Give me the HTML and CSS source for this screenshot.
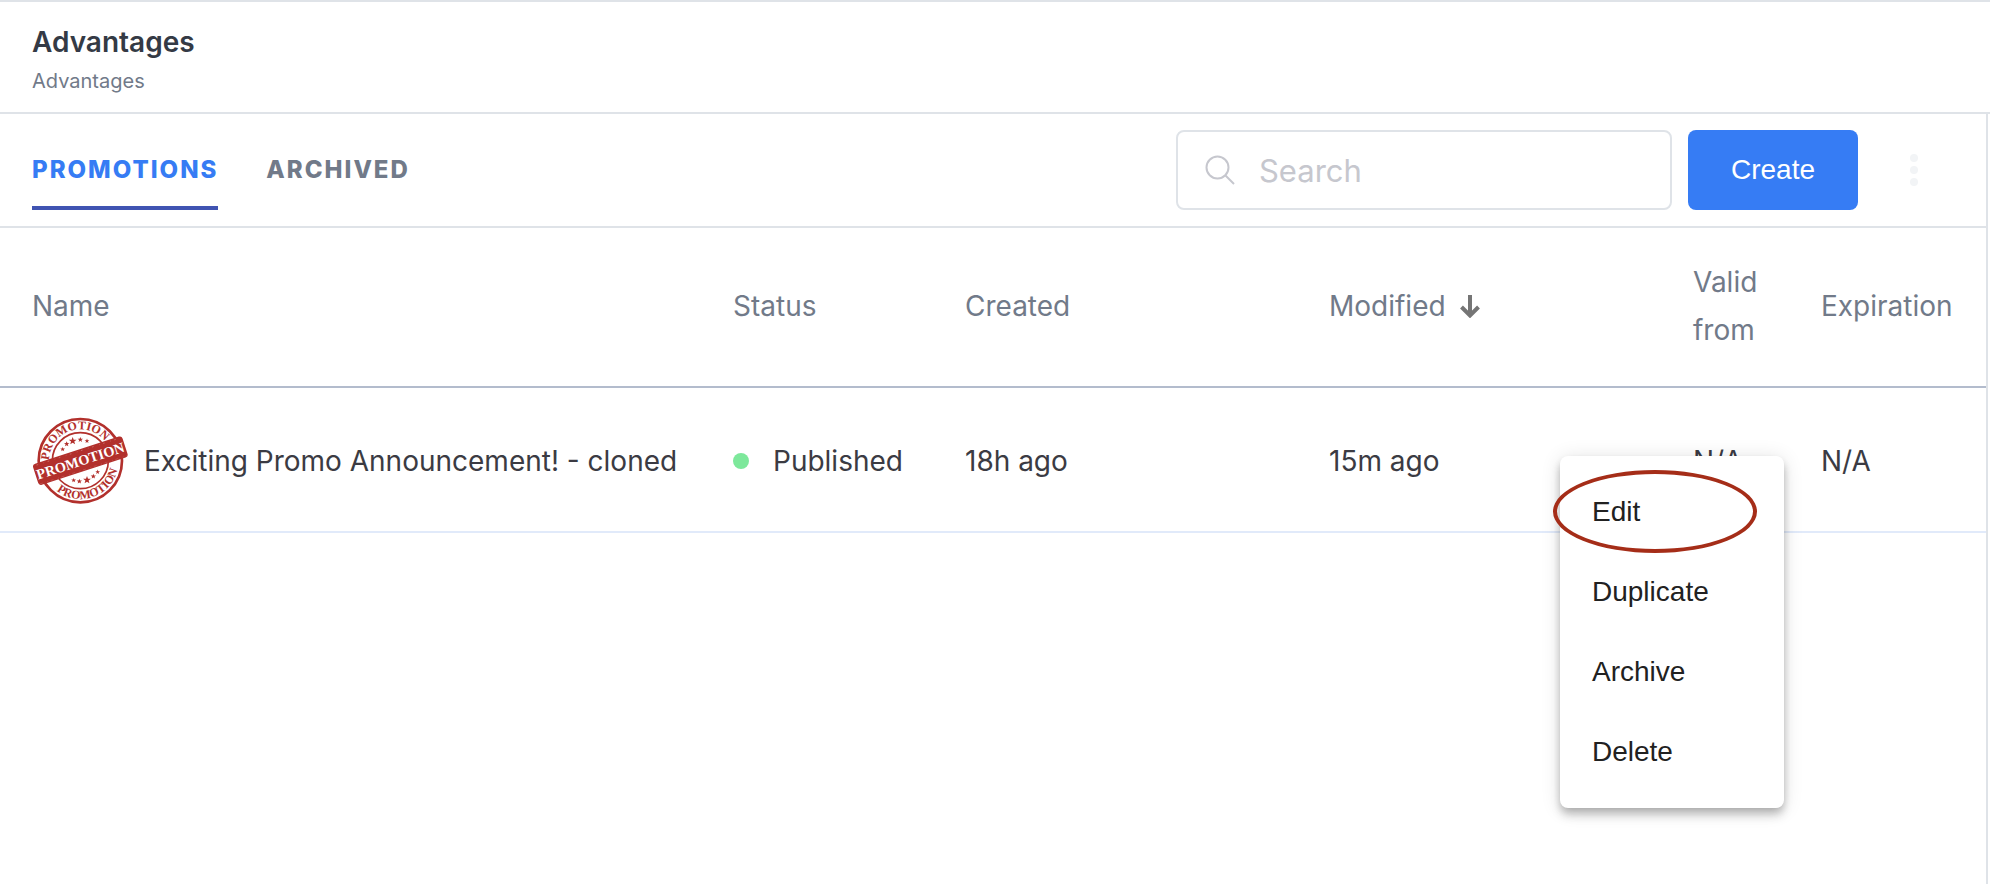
FILE: index.html
```
<!doctype html>
<html lang="en">
<head>
    <meta charset="utf-8">
    <title>Advantages</title>
    <link rel="stylesheet" href="styles.css">
</head>
<body>
    <header class="header">
        <h1>Advantages</h1>
        <p>Advantages</p>
    </header>
    <main class="main">
        <div class="toolbar">
            <nav class="tabs">
                <a href="#promotions" class="current">PROMOTIONS</a>
                <a href="#archived">ARCHIVED</a>
            </nav>
            <label class="search" for="search">
                <svg width="30" height="30" viewBox="0 0 30 30" fill="none" stroke="#c6c7ce" stroke-width="2" aria-hidden="true">
                    <circle cx="12.5" cy="12.5" r="11"/>
                    <path d="M20.5 20.5L29 29"/>
                </svg>
                <input type="text" id="search" placeholder="Search" aria-label="Search">
            </label>
            <button type="button" class="create">Create</button>
            <button type="button" class="more" aria-label="More">
                <svg width="8" height="32" viewBox="0 0 8 32" fill="#f2f4f6">
                    <circle cx="4" cy="4" r="4"/>
                    <circle cx="4" cy="16" r="4"/>
                    <circle cx="4" cy="28" r="4"/>
                </svg>
            </button>
        </div>
        <div class="list">
            <table>
                <thead>
                    <tr>
                        <th class="name">Name</th>
                        <th class="status">Status</th>
                        <th class="date">Created</th>
                        <th class="date">
                            <span class="sort">Modified
                                <svg width="20" height="24" viewBox="0 0 20 24" fill="none" stroke="#757575" stroke-width="4" aria-hidden="true">
                                    <path d="M10 1V21M1.5 13L10 21.5L18.5 13"/>
                                </svg>
                            </span>
                        </th>
                        <th class="from">Valid from</th>
                        <th class="expiration">Expiration</th>
                    </tr>
                </thead>
                <tbody>
                    <tr>
                        <td class="name">
                            <div class="promo">
                                <!-- promotion stamp -->
                                <svg class="stamp" width="96" height="88" viewBox="96 109 288 264" aria-hidden="true">
                                    <defs>
                                        <path id="arc-top" d="M147 240A94 94 0 0 1 335 240"/>
                                        <path id="arc-bottom" d="M126 240A115 115 0 0 0 356 240"/>
                                        <path id="star" d="M0-9L2.4-3L9-2.8L3.7 1.2L5.6 7.6L0 3.8L-5.6 7.6L-3.7 1.2L-9-2.8L-2.4-3Z"/>
                                    </defs>
                                    <g fill="none" stroke="#b2302c">
                                        <circle cx="241" cy="240" r="125" stroke-width="8"/>
                                        <circle cx="241" cy="240" r="84" stroke-width="5"/>
                                    </g>
                                    <g class="stamp-ring" fill="#b2302c">
                                        <text transform="rotate(-19 241 240)"><textPath href="#arc-top" startOffset="50%" text-anchor="middle">PROMOTION</textPath></text>
                                        <text transform="rotate(-19 241 240)"><textPath href="#arc-bottom" startOffset="50%" text-anchor="middle">PROMOTION</textPath></text>
                                    </g>
                                    <g fill="#b2302c">
                                        <use href="#star" transform="translate(188 206) scale(.8)"/>
                                        <use href="#star" transform="translate(200 190) scale(.9)"/>
                                        <use href="#star" transform="translate(218 181) scale(1.3)"/>
                                        <use href="#star" transform="translate(241 177) scale(.9)"/>
                                        <use href="#star" transform="translate(261 181) scale(.8)"/>
                                        <use href="#star" transform="translate(221 299) scale(.8)"/>
                                        <use href="#star" transform="translate(238 302) scale(.9)"/>
                                        <use href="#star" transform="translate(261 298) scale(1.3)"/>
                                        <use href="#star" transform="translate(280 287) scale(.9)"/>
                                        <use href="#star" transform="translate(293 274) scale(.8)"/>
                                    </g>
                                    <g transform="rotate(-18 241 240)">
                                        <rect x="100" y="207" width="282" height="66" rx="9" fill="#b2302c"/>
                                        <path d="M104 269H378" stroke="#cf7b78" stroke-width="1" stroke-dasharray="9 14 3 8"/>
                                        <path d="M112 212H370" stroke="#cf7b78" stroke-width="2" stroke-dasharray="5 17 2 11"/>
                                        <text class="stamp-band" x="241" y="255" text-anchor="middle" fill="#fff">PROMOTION</text>
                                    </g>
                                </svg>
                                Exciting Promo Announcement! - cloned
                            </div>
                        </td>
                        <td><span class="published">Published</span></td>
                        <td>18h ago</td>
                        <td>15m ago</td>
                        <td>N/A</td>
                        <td>N/A</td>
                    </tr>
                </tbody>
            </table>
            <div class="menu">
                <button type="button" class="marked">Edit</button>
                <button type="button">Duplicate</button>
                <button type="button">Archive</button>
                <button type="button">Delete</button>
            </div>
        </div>
    </main>
</body>
</html>
```

FILE: styles.css
```
*, :before, :after{
    margin: 0;
    padding: 0;
    box-sizing: border-box;
}
body{
    min-height: 100vh;
    display: flex;
    flex-direction: column;
    font-family: Inter, "Liberation Sans", sans-serif;
    font-size: 28px;
    color: #3b3b43;
    background-color: #fff;
}
button{
    border: 0;
    background: none;
    font-family: "Liberation Sans", Arial, sans-serif;
    font-size: 28px;
    cursor: pointer;
}

/* header */
.header{
    padding: 20px 32px 12px;
    border-top: 2px solid #dfe3e8;
    border-bottom: 2px solid #dfe3e8;
}
.header h1{
    font-size: 28px;
    line-height: 40px;
    font-weight: 600;
    color: #343a45;
}
.header p{
    font-size: 20px;
    line-height: 38px;
    color: #717a89;
}
.main{
    flex: 1;
    margin-right: 2px;
    border-right: 2px solid #dfe3e8;
}

/* tabs, search, create */
.toolbar{
    display: flex;
    align-items: center;
    gap: 16px;
    padding: 16px 32px;
    border-bottom: 2px solid #dfe3e8;
}
.tabs{
    flex: 1;
    display: flex;
    gap: 48px;
}
.tabs a{
    height: 80px;
    border-bottom: 4px solid transparent;
    font-size: 24px;
    line-height: 80px;
    font-weight: 800;
    letter-spacing: 2px;
    color: #717a89;
    text-decoration: none;
}
.tabs a.current{
    color: #367cf4;
    border-bottom-color: #4054b2;
}
.search{
    width: 496px;
    height: 80px;
    display: flex;
    align-items: center;
    gap: 24px;
    padding: 0 27px;
    border: 2px solid #dfe3e8;
    border-radius: 8px;
}
.search input{
    flex: 1;
    min-width: 0;
    border: 0;
    outline: 0;
    background: none;
    font-family: inherit;
    font-size: 31px;
    color: #3b3b43;
}
.search input::placeholder{
    color: #c6c7ce;
}
.create{
    height: 80px;
    padding: 0 43px;
    border-radius: 8px;
    background-color: #367cf4;
    color: #fff;
}
.more{
    width: 80px;
    height: 80px;
}
.more svg{
    display: block;
    margin: 0 auto;
}

/* list */
.list{
    position: relative;
}
table{
    width: 100%;
    table-layout: fixed;
    border-collapse: separate;
    border-spacing: 0;
}
th, td{
    text-align: left;
    font-weight: 400;
    line-height: 48px;
}
th{
    height: 160px;
    padding-right: 32px;
    padding-bottom: 2px;
    border-bottom: 2px solid #b3bccd;
    color: #717a89;
}
td{
    height: 145px;
    padding-top: 2px;
    border-bottom: 2px solid #e1eafa;
}
.name{
    padding-left: 32px;
}
.status{
    width: 232px;
}
.date{
    width: 364px;
}
.from{
    width: 128px;
}
.expiration{
    width: 165px;
}
.sort{
    display: flex;
    align-items: center;
    gap: 14px;
}
.promo{
    display: flex;
    align-items: center;
    gap: 16px;
    white-space: nowrap;
}
.stamp{
    flex: none;
}
.stamp-ring{
    font: bold 36px "Liberation Serif", serif;
}
.stamp-band{
    font: bold 43px "Liberation Serif", serif;
}
.published{
    display: flex;
    align-items: center;
    gap: 24px;
}
.published:before{
    content: "";
    width: 16px;
    height: 16px;
    border-radius: 50%;
    background-color: #7de89b;
}

/* row menu, opens over the list */
.menu{
    position: absolute;
    top: 228px;
    right: 202px;
    width: 224px;
    padding: 16px 0;
    border-radius: 8px;
    background-color: #fff;
    box-shadow: 0 4px 8px -2px rgba(0,0,0,.2), 0 8px 10px rgba(0,0,0,.14), 0 2px 20px rgba(0,0,0,.12);
}
.menu button{
    position: relative;
    display: block;
    width: 100%;
    height: 80px;
    padding: 0 32px;
    text-align: left;
    color: #212121;
}
.menu .marked:after{
    content: "";
    position: absolute;
    top: -2px;
    left: -7px;
    width: 204px;
    height: 83px;
    border: 4px solid #a52d18;
    border-radius: 50%;
}
```
